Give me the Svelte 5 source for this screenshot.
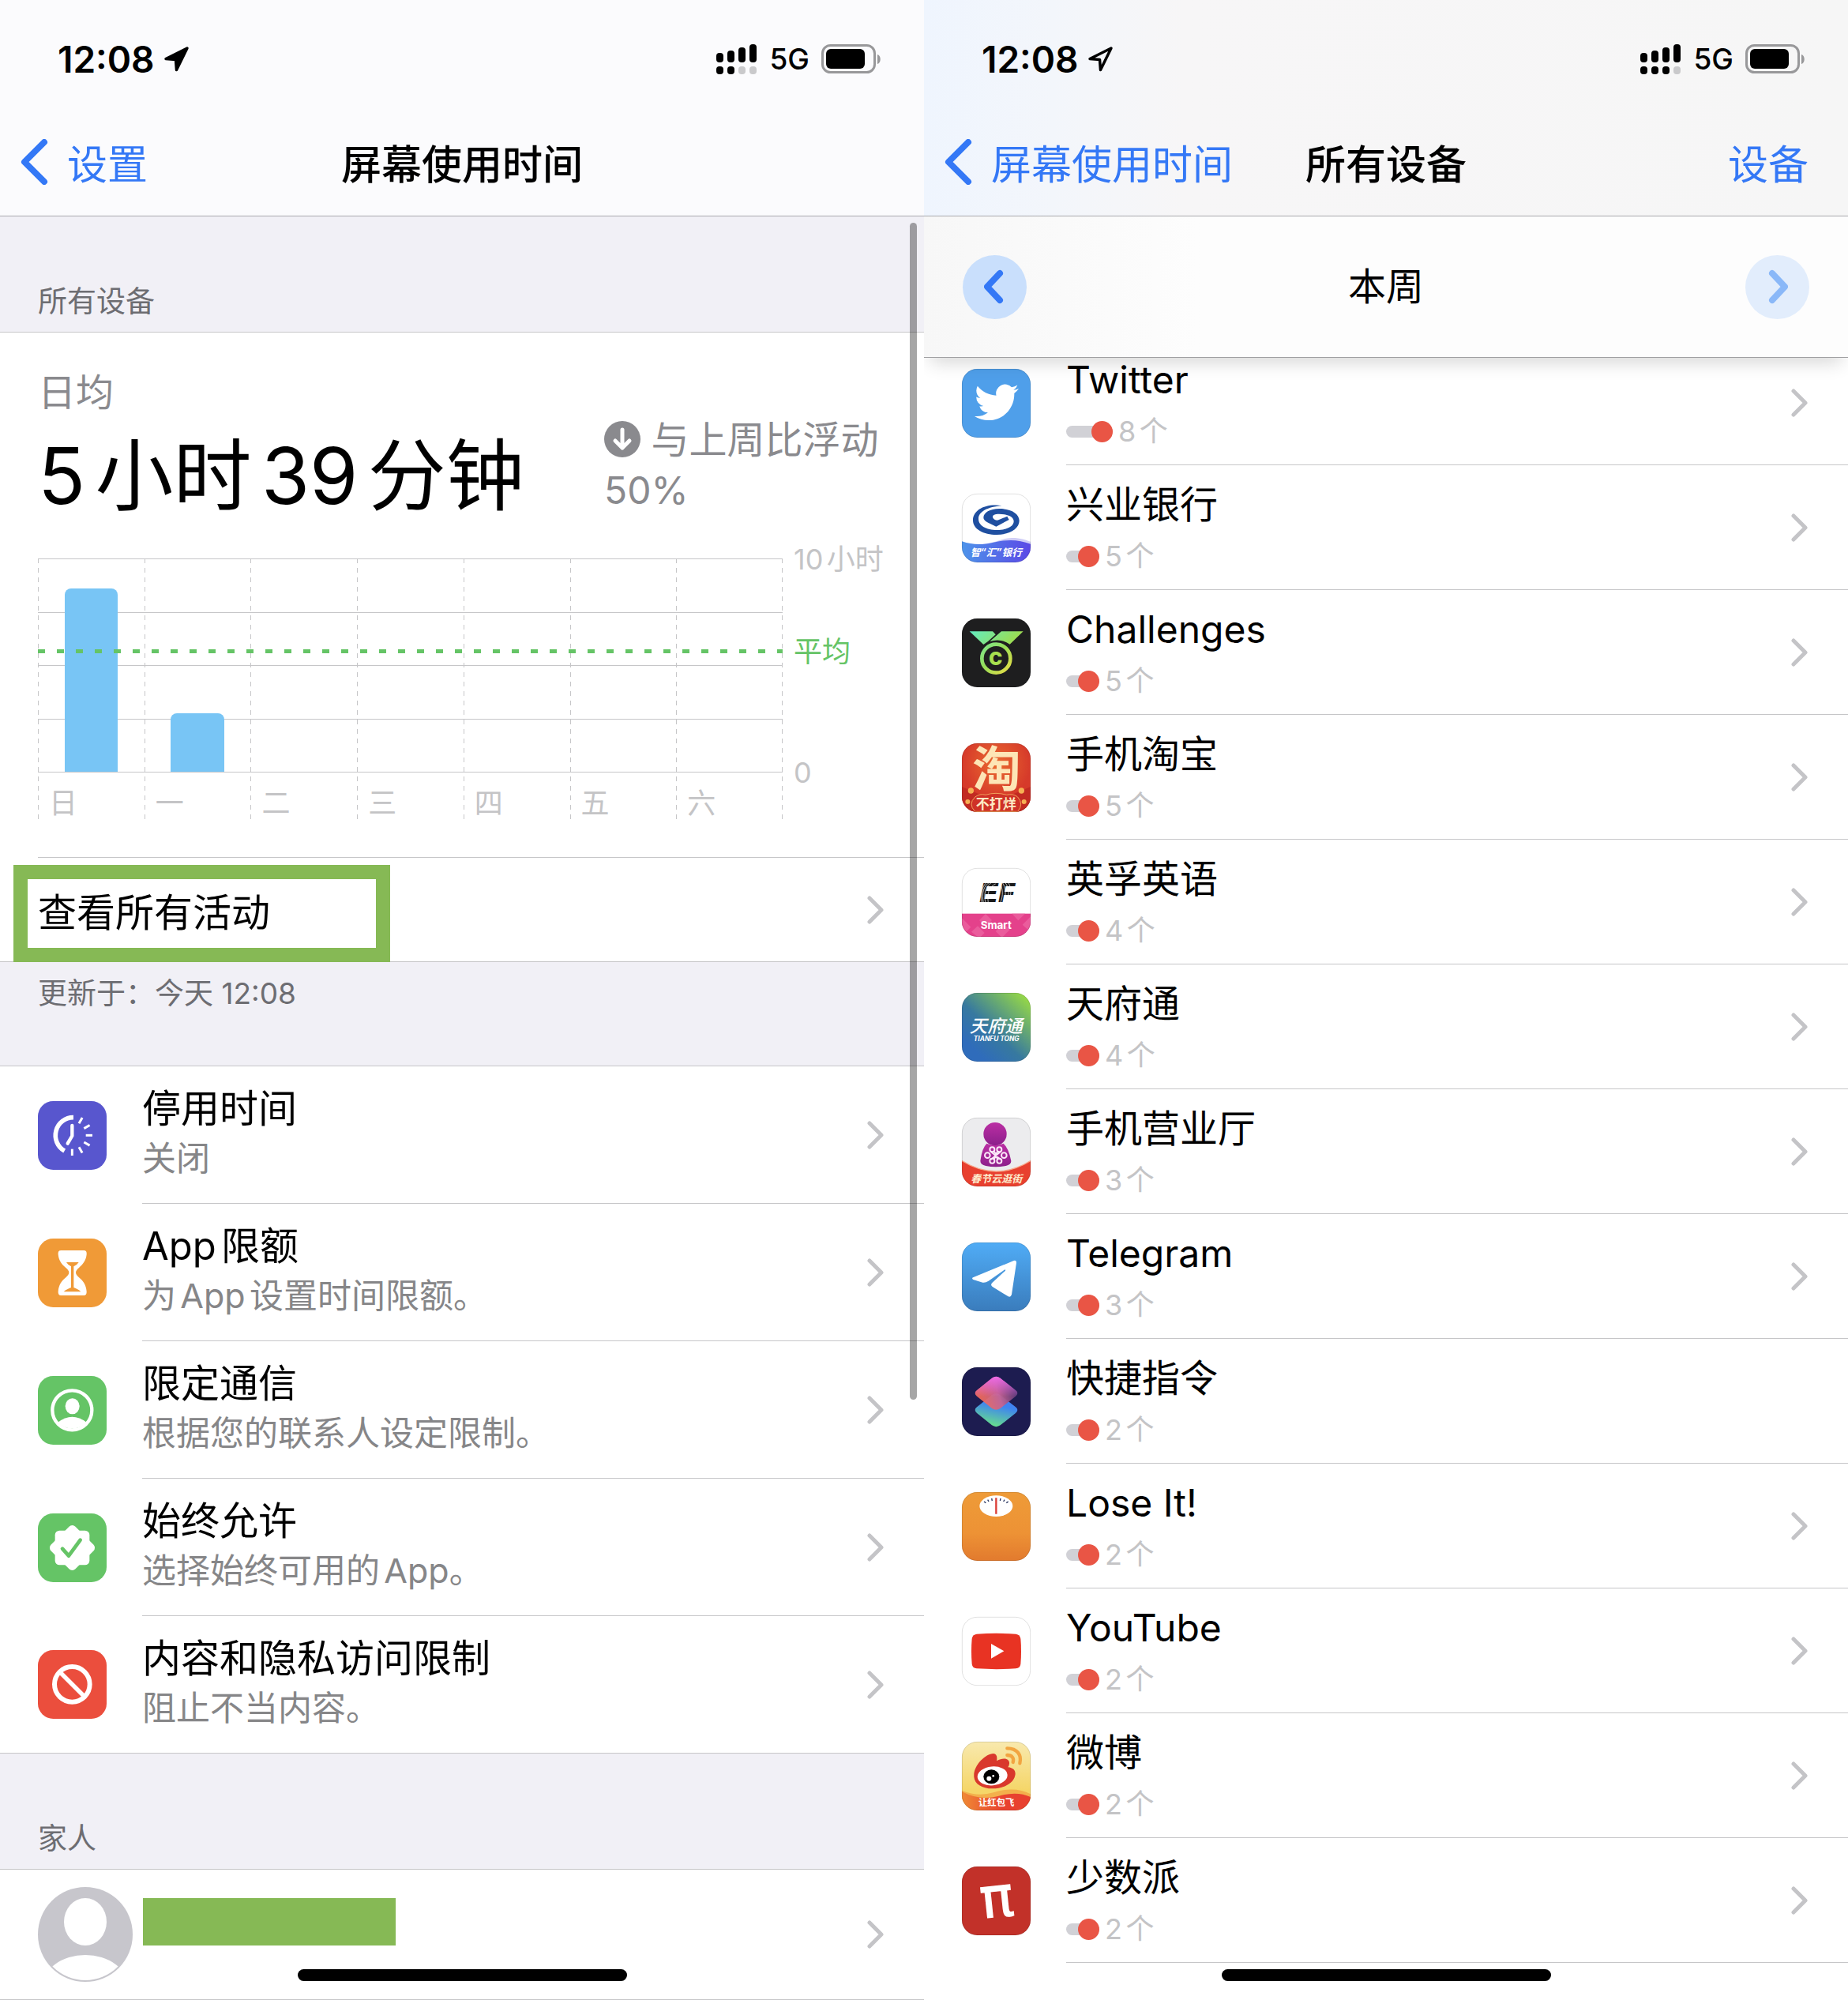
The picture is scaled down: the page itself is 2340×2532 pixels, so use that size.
<script>
  const week = [
    { day: "日", hours: 8.6 },
    { day: "一", hours: 2.75 },
    { day: "二", hours: 0 },
    { day: "三", hours: 0 },
    { day: "四", hours: 0 },
    { day: "五", hours: 0 },
    { day: "六", hours: 0 },
  ];
  const maxHours = 10;

  const limits = [
    { icon: "downtime", color: "#5856ce", title: "停用时间", detail: "关闭" },
    { icon: "hourglass", color: "#f09a37", title: "App限额", detail: "为App设置时间限额。" },
    { icon: "person", color: "#65c466", title: "限定通信", detail: "根据您的联系人设定限制。" },
    { icon: "allowed", color: "#65c466", title: "始终允许", detail: "选择始终可用的App。" },
    { icon: "blocked", color: "#eb4e3d", title: "内容和隐私访问限制", detail: "阻止不当内容。" },
  ];

  // pill is the length of the usage bar in front of the count
  const apps = [
    { icon: "twitter", name: "Twitter", count: 8, pill: 59, more: true },
    { icon: "cib", name: "兴业银行", count: 5, pill: 42, more: true },
    { icon: "challenges", name: "Challenges", count: 5, pill: 42, more: true },
    { icon: "taobao", name: "手机淘宝", count: 5, pill: 42, more: true },
    { icon: "ef", name: "英孚英语", count: 4, pill: 42, more: true },
    { icon: "tianfu", name: "天府通", count: 4, pill: 42, more: true },
    { icon: "unicom", name: "手机营业厅", count: 3, pill: 42, more: true },
    { icon: "telegram", name: "Telegram", count: 3, pill: 42, more: true },
    { icon: "shortcuts", name: "快捷指令", count: 2, pill: 42, more: false },
    { icon: "loseit", name: "Lose It!", count: 2, pill: 42, more: true },
    { icon: "youtube", name: "YouTube", count: 2, pill: 42, more: true },
    { icon: "weibo", name: "微博", count: 2, pill: 42, more: true },
    { icon: "sspai", name: "少数派", count: 2, pill: 42, more: true },
  ];
</script>

{#snippet statusBar(filled, dots)}
  <div class="status">
    <span class="time">12:08</span>
    <svg class="location" viewBox="0 0 34 34" width="34" height="34">
      <path
        d="M31 3 4 16.5 16.5 17.500 17.500 30.500Z"
        fill={filled ? "#000" : "none"}
        stroke="#000"
        stroke-width="3.500"
        stroke-linejoin="round"
      />
    </svg>
    <svg class="signal" viewBox="0 0 52 38" width="52" height="38">
      <rect x="0" y="11" width="9" height="12" rx="4" />
      <rect x="14" y="8" width="9" height="15" rx="4" />
      <rect x="28" y="4" width="9" height="19" rx="4" />
      <rect x="42" y="0" width="9" height="23" rx="4" />
      {#each [0, 14, 28, 42] as x, i}
        <rect {x} y="28" width="9" height="10" rx="4" fill={i < dots ? "#000" : "#c9c9cb"} />
      {/each}
    </svg>
    <span class="network">5G</span>
    <svg class="battery" viewBox="0 0 76 38" width="76" height="38">
      <rect x="1.500" y="1.500" width="66" height="34" rx="10" fill="none" stroke="#98989a" stroke-width="3" />
      <rect x="6" y="6" width="49" height="25" rx="6" />
      <path d="M71 13c5 1 5 11 0 12Z" fill="#98989a" />
    </svg>
  </div>
{/snippet}

{#snippet back(label)}
  <button class="back">
    <svg viewBox="0 0 36 58" width="36" height="58">
      <path d="M31 4 6 29l25 25" />
    </svg>
    {label}
  </button>
{/snippet}

{#snippet chevron()}
  <svg class="chevron" viewBox="0 0 22 36" width="22" height="36">
    <path d="M4 3l15 15L4 33" />
  </svg>
{/snippet}

{#snippet settingIcon(name, color)}
  <svg class="icon" viewBox="0 0 261 261">
    <rect width="261" height="261" rx="58" fill={color} />
    {#if name === "downtime"}
      <g fill="none" stroke="#fff">
        <path d="M135 62a68 68 0 0 0-34 127" stroke-width="17" />
        <path d="M130 93v39l-17 29" stroke-width="13" stroke-linecap="round" stroke-linejoin="round" />
        {#each [30, 60, 90, 120, 150, 180] as angle}
          <path d="M130 78V53" stroke-width="9" transform="rotate({angle} 130 130)" />
        {/each}
      </g>
    {:else if name === "hourglass"}
      <path
        fill="#fff"
        d="M88 45h86q13 0 11 16c-3 25-15 37-29 50q-12 10-12 18t12 19c17 14 27 29 29 53q1 15-11 15H88q-12 0-11-15c2-24 12-39 29-53q12-11 12-19t-12-18C91 98 80 86 77 61q-2-16 11-16Z"
      />
      <path
        fill={color}
        d="M108 90h47q-4 8-19 16v80c10 4 20 8 27 16H98c8-8 19-12 28-16v-80q-14-8-18-16Z"
      />
    {:else if name === "person"}
      <circle cx="130" cy="130" r="75" fill="none" stroke="#fff" stroke-width="13" />
      <ellipse cx="131" cy="115" rx="27" ry="30" fill="#fff" />
      <path d="M76 176q54-42 109 0a75 75 0 0 1-109 0Z" fill="#fff" />
    {:else if name === "allowed"}
      <rect x="65" y="65" width="131" height="131" rx="17" fill="#fff" />
      <rect x="65" y="65" width="131" height="131" rx="17" fill="#fff" transform="rotate(45 130.500 130.500)" />
      <path
        d="M93 134l24 27 44-60"
        fill="none"
        stroke={color}
        stroke-width="14"
        stroke-linecap="round"
        stroke-linejoin="round"
      />
    {:else}
      <circle cx="130" cy="130" r="67" fill="none" stroke="#fff" stroke-width="18" />
      <path d="M84 84l93 93" stroke="#fff" stroke-width="16" />
    {/if}
  </svg>
{/snippet}

{#snippet appIcon(name)}
  <svg class="icon app-icon" viewBox="0 0 261 261">
    <clipPath id="{name}-clip"><rect width="261" height="261" rx="58" /></clipPath>
    <g clip-path="url(#{name}-clip)">
      {#if name === "twitter"}
        <rect width="261" height="261" fill="#4f9fea" />
        <path
          fill="#fff"
          transform="translate(48 43) scale(7)"
          d="M23.953 4.570a10 10 0 0 1-2.825.775 4.958 4.958 0 0 0 2.163-2.723c-.951.555-2.005.959-3.127 1.184a4.920 4.920 0 0 0-8.384 4.482C7.690 8.095 4.067 6.130 1.640 3.162a4.822 4.822 0 0 0-.666 2.475c0 1.710.870 3.213 2.188 4.096a4.904 4.904 0 0 1-2.228-.616v.060a4.923 4.923 0 0 0 3.946 4.827 4.996 4.996 0 0 1-2.212.085 4.936 4.936 0 0 0 4.604 3.417 9.867 9.867 0 0 1-6.102 2.105c-.390 0-.779-.023-1.170-.067a13.995 13.995 0 0 0 7.557 2.209c9.053 0 13.998-7.496 13.998-13.985 0-.210 0-.420-.015-.630A9.935 9.935 0 0 0 24 4.590z"
        />
      {:else if name === "cib"}
        <defs>
          <linearGradient id="cib-wave">
            <stop offset="0" stop-color="#4d94ea" />
            <stop offset="1" stop-color="#5b48e6" />
          </linearGradient>
        </defs>
        <rect width="261" height="261" fill="#fff" />
        <path fill="#cfcdf6" d="M60 192c60 0 90-24 130-24 35 0 50 8 71 14v40H60Z" />
        <path fill="url(#cib-wave)" d="M0 181c40 14 80 14 120 4 50-12 95-12 141 6v70H0Z" />
        <path
          fill="#1f4fa0"
          d="M152 46C90 36 42 62 42 101c0 33 40 55 90 55 48 0 86-22 86-53 0-28-33-46-76-46-36 0-60 15-60 34 0 14 20 20 48 34l49-26-7-13-33 14c-10 4-22-4-22-12 0-7 8-11 24-11 34 0 56 11 56 28 0 20-28 33-64 33-40 0-70-16-70-42 0-28 35-46 89-50Z"
        />
        <text x="130" y="238" class="label" font-size="38" font-style="italic" fill="#fff">智“汇”银行</text>
      {:else if name === "challenges"}
        <defs>
          <linearGradient id="medal" x1="30" y1="50" x2="190" y2="210" gradientUnits="userSpaceOnUse">
            <stop offset="0" stop-color="#63ecc0" />
            <stop offset=".6" stop-color="#98dd57" />
            <stop offset="1" stop-color="#f3dd45" />
          </linearGradient>
        </defs>
        <rect width="261" height="261" fill="#1e1e1f" />
        <path fill="url(#medal)" d="M29 49h88l11 12-28 25-18 13Z" />
        <path fill="url(#medal)" d="M150 49h83l-51 49q-34-24-76-11Z" />
        <circle cx="130" cy="152" r="54" fill="none" stroke="url(#medal)" stroke-width="14" />
        <text x="128" y="177" class="label black" font-size="68" fill="#a8e04f">C</text>
      {:else if name === "taobao"}
        <defs>
          <radialGradient id="taobao" cy=".3">
            <stop offset="0" stop-color="#ea6a2f" />
            <stop offset="1" stop-color="#d63a2a" />
          </radialGradient>
        </defs>
        <rect width="261" height="261" fill="url(#taobao)" />
        <path fill="#c22a22" d="M0 165l70 30h120l71-30v96H0Z" />
        <g fill="#f6b054">
          <circle cx="34" cy="180" r="11" />
          <circle cx="226" cy="180" r="11" />
          <circle cx="22" cy="222" r="9" />
          <circle cx="236" cy="222" r="9" />
        </g>
        <path fill="#cf3127" stroke="#f2a25c" stroke-width="3" d="M50 259q-28-28 0-55 18-14 40-8 38-12 80 0 26-6 42 8 24 27 0 55Z" />
        <text x="132" y="164" class="label" font-size="184" fill="#fde5b6">淘</text>
        <text x="130" y="248" class="label" font-size="51" fill="#fdeac4">不打烊</text>
      {:else if name === "ef"}
        <rect width="261" height="261" fill="#fff" />
        <rect y="173" width="261" height="88" fill="#e4418b" />
        <g fill="#ea5c9c">
          <path d="M0 190l34 34-34 34ZM90 174l24 24-24 24-24-24ZM128 240l30-30 24 24-30 30Z" />
          <path d="M190 173h50l-26 26ZM230 215l31-31v60ZM60 220l26 26-20 20-30-24Z" />
        </g>
        <text x="134" y="130" class="label latin" font-size="106" font-style="italic" fill="#1b1b1b">EF</text>
        <g fill="none" stroke="#fff" stroke-width="2">
          <path d="M96 52c-20 16-26 48-20 80M108 52c-26 14-34 44-26 80M118 52c-30 16-36 46-28 80M128 60c-28 12-32 40-28 72" />
          <path d="M142 52c14 24 16 52 4 80M152 52c16 24 18 52 4 80M162 52c20 24 20 56 2 80M174 52c16 22 14 50 4 70" />
        </g>
        <text x="130" y="231" class="label" font-size="40" fill="#fff">Smart</text>
      {:else if name === "tianfu"}
        <defs>
          <linearGradient id="tianfu" x1=".2" y1=".85" x2=".95" y2=".05">
            <stop offset="0" stop-color="#2f6cbb" />
            <stop offset=".35" stop-color="#37799f" />
            <stop offset="1" stop-color="#98da45" />
          </linearGradient>
        </defs>
        <rect width="261" height="261" fill="url(#tianfu)" />
        <text x="130" y="150" class="label medium" font-size="67" font-style="italic" fill="#fff">天府通</text>
        <text x="131" y="184" class="label" font-size="25" font-style="italic" fill="#fff">TIANFU TONG</text>
      {:else if name === "unicom"}
        <defs>
          <linearGradient id="unicom" x2="0" y2="1">
            <stop offset="0" stop-color="#bb2fa4" />
            <stop offset="1" stop-color="#8c1f8b" />
          </linearGradient>
        </defs>
        <rect width="261" height="261" fill="#ececee" />
        <circle cx="126" cy="62" r="44" fill="url(#unicom)" />
        <path fill="url(#unicom)" d="M94 98q32 14 64 0 20 18 29 66 1 14-20 19-38 8-76 0-21-5-21-19 6-48 24-66Z" />
        <g fill="none" stroke="#fbe8f8" stroke-width="6">
          <circle cx="115" cy="121" r="9" />
          <circle cx="142" cy="121" r="9" />
          <circle cx="97" cy="143" r="10" />
          <circle cx="160" cy="143" r="10" />
          <circle cx="115" cy="164" r="9" />
          <circle cx="142" cy="164" r="9" />
          <path d="M110 129l37 30M147 129l-37 30M121 128l8 9 8-9M121 157l8-9 8 9" />
        </g>
        <path fill="#e8402f" stroke="#f7a98c" stroke-width="4" d="M-4 161q134 86 269 0v104H-4Z" />
        <text x="131" y="247" class="label" font-size="39" font-style="italic" fill="#fdeccd">春节云逛街</text>
      {:else if name === "telegram"}
        <defs>
          <linearGradient id="telegram" x2="0" y2="1">
            <stop offset="0" stop-color="#50acf6" />
            <stop offset="1" stop-color="#3a7cbc" />
          </linearGradient>
        </defs>
        <rect width="261" height="261" fill="url(#telegram)" />
        <path
          fill="#fff"
          d="M42 133 197 69q10-3 10 8l-18 120q-3 12-13 8l-60-37q-9-7-1-15l50-46q2-6-4-3l-60 42q-12 8-22 6l-36-11q-7-4-1-8Z"
        />
      {:else if name === "shortcuts"}
        <defs>
          <linearGradient id="lower" x1=".5" y1="1" x2=".8" y2="0">
            <stop offset="0" stop-color="#66dd8d" />
            <stop offset=".6" stop-color="#3f84f0" />
            <stop offset="1" stop-color="#4379f4" />
          </linearGradient>
          <linearGradient id="upper" x1=".2" y1=".8" x2="1" y2=".6">
            <stop offset="0" stop-color="#ef6a5e" />
            <stop offset=".5" stop-color="#c96390" />
            <stop offset="1" stop-color="#5d3b7b" />
          </linearGradient>
          <linearGradient id="glow" x2="0" y2="1">
            <stop offset="0" stop-color="#ee6ae6" />
            <stop offset=".6" stop-color="#ee6ae6" stop-opacity="0" />
          </linearGradient>
        </defs>
        <rect width="261" height="261" fill="#1d1c50" />
        <path fill="url(#lower)" d="M146 105l58 46q14 11 0 23l-58 46q-16 11-32 0l-57-46q-14-12 0-23l57-46q16-11 32 0Z" />
        <path fill="url(#upper)" fill-opacity=".93" d="M146 41l58 46q14 11 0 23l-58 46q-16 11-32 0l-57-46q-14-12 0-23l57-46q16-11 32 0Z" />
        <path fill="url(#glow)" d="M146 41l58 46q14 11 0 23l-58 46q-16 11-32 0l-57-46q-14-12 0-23l57-46q16-11 32 0Z" />
      {:else if name === "loseit"}
        <defs>
          <linearGradient id="loseit" x2="0" y2="1">
            <stop offset="0" stop-color="#ee9b38" />
            <stop offset=".6" stop-color="#ed9235" />
            <stop offset="1" stop-color="#e27a2e" />
          </linearGradient>
        </defs>
        <rect width="261" height="261" fill="url(#loseit)" />
        <ellipse cx="130" cy="53" rx="63" ry="40" fill="#fff" />
        <path d="M84 36l7 5M98 29l4 7M113 24l2 9M147 24l-2 9M162 29l-4 7M176 36l-7 5" stroke="#28345f" stroke-width="4" />
        <path d="M130 22v61" stroke="#dc3f38" stroke-width="7" />
      {:else if name === "youtube"}
        <rect width="261" height="261" fill="#fff" />
        <path fill="#e83323" d="M56 65q75-5 149 0 16 2 18 18 4 48 0 96-2 15-18 17-74 5-149 0-16-2-18-17-4-48 0-96 2-16 18-18Z" />
        <path fill="#fff" d="M111 102l49 28-49 28Z" />
      {:else if name === "weibo"}
        <defs>
          <linearGradient id="weibo" x2="0" y2="1">
            <stop offset="0" stop-color="#f8e9ae" />
            <stop offset=".7" stop-color="#f5d669" />
          </linearGradient>
          <linearGradient id="weibo-wave">
            <stop offset="0" stop-color="#f08a35" />
            <stop offset=".6" stop-color="#e8412f" />
          </linearGradient>
        </defs>
        <rect width="261" height="261" fill="url(#weibo)" />
        <path fill="#f3b04c" d="M0 185q60 26 120 8 80-26 141 6v30H0Z" />
        <path fill="url(#weibo-wave)" d="M0 190q70 36 140 16 70-20 121 4v51H0Z" />
        <path
          fill="#d9382c"
          d="M46 134c-4-42 42-88 74-89q17 2 12 28c24-14 46-10 48 6q1 10-5 18c22 2 31 15 27 31-6 32-48 50-86 50-40 0-68-18-70-44Z"
        />
        <ellipse cx="116" cy="130" rx="57" ry="36" fill="#fff" transform="rotate(-5 116 130)" />
        <ellipse cx="112" cy="133" rx="30" ry="27" fill="#000" />
        <circle cx="103" cy="140" r="9" fill="#fff" />
        <circle cx="119" cy="130" r="4" fill="#fff" />
        <g fill="none" stroke="#f2a541" stroke-width="13" stroke-linecap="round">
          <path d="M172 25c38 0 56 26 48 57" />
          <path d="M172 51c18 0 27 11 22 27" />
        </g>
        <text x="131" y="244" class="label" font-size="34" fill="#fff">让红包飞</text>
      {:else}
        <rect width="261" height="261" fill="#c23129" />
        <text x="133" y="190" class="label pi" font-size="212" fill="#fff" transform="rotate(-6 131 130)">π</text>
      {/if}
    </g>
    <rect class="edge" x="1" y="1" width="259" height="259" rx="57" />
  </svg>
{/snippet}

<main>
  <section class="screen">
    <header class="nav">
      {@render statusBar(true, 2)}
      <div class="nav-row">
        {@render back("设置")}
        <h1>屏幕使用时间</h1>
      </div>
    </header>

    <h2 class="group-title">所有设备</h2>

    <div class="summary">
      <div class="totals">
        <div>
          <p class="caption">日均</p>
          <p class="total">5小时39分钟</p>
        </div>
        <p class="change">
          <svg viewBox="0 0 46 46" width="46" height="46">
            <circle cx="23" cy="23" r="23" fill="#8a8a8e" />
            <path d="M23 11v23M14 25l9 9 9-9" />
          </svg>
          与上周比浮动<br />50%
        </p>
      </div>

      <div class="chart">
        <div class="plot">
          <div class="gridlines">
            {#each Array(5) as _}
              <span></span>
            {/each}
          </div>
          {#each week as { day, hours }}
            <div class="day">
              <div class="track">
                <div class="bar" style="height: {(hours / maxHours) * 100}%"></div>
              </div>
              <span>{day}</span>
            </div>
          {/each}
          <svg class="average" width="100%" height="5">
            <line x1="0" y1="2.500" x2="100%" y2="2.500" />
          </svg>
        </div>
        <div class="axis">
          <span>10小时</span>
          <span class="avg-label">平均</span>
          <span>0</span>
        </div>
      </div>

      <a class="view-all" href="#activity">
        <span>查看所有活动</span>
        {@render chevron()}
      </a>
    </div>

    <p class="updated">更新于：今天 12:08</p>

    <ul class="limits">
      {#each limits as item}
        <li>
          <a href="#{item.icon}">
            {@render settingIcon(item.icon, item.color)}
            <div class="body">
              <div>
                <p class="title">{item.title}</p>
                <p class="detail">{item.detail}</p>
              </div>
              {@render chevron()}
            </div>
          </a>
        </li>
      {/each}
    </ul>

    <h2 class="group-title">家人</h2>

    <a class="member" href="#family" aria-label="家人">
      <svg class="avatar" viewBox="0 0 120 120" width="120" height="120">
        <clipPath id="avatar-clip"><circle cx="60" cy="60" r="58" /></clipPath>
        <circle cx="60" cy="60" r="60" fill="#c7c6cc" />
        <ellipse cx="60" cy="44" rx="27" ry="30" fill="#fff" />
        <ellipse cx="60" cy="126" rx="54" ry="40" fill="#fff" clip-path="url(#avatar-clip)" />
      </svg>
      <span class="redacted"></span>
      {@render chevron()}
    </a>

    <div class="scrollbar"></div>
    <div class="home"><span></span></div>
  </section>

  <section class="screen">
    <header class="nav tinted">
      {@render statusBar(false, 3)}
      <div class="nav-row">
        {@render back("屏幕使用时间")}
        <h1>所有设备</h1>
        <button class="devices">设备</button>
      </div>
    </header>

    <div class="week">
      <button aria-label="上一周">
        <svg viewBox="0 0 28 44" width="28" height="44"><path d="M20 5 4 22l16 17" /></svg>
      </button>
      <span>本周</span>
      <button aria-label="下一周" class="dim">
        <svg viewBox="0 0 28 44" width="28" height="44"><path d="M8 5l16 17L8 39" /></svg>
      </button>
    </div>

    <ul class="apps">
      {#each apps as app}
        <li>
          <a href="#{app.icon}">
            {@render appIcon(app.icon)}
            <div class="body">
              <div>
                <p class="title">{app.name}</p>
                <p class="count">
                  <span class="pill" style="width: {app.pill}px"></span>
                  <span>{app.count}个</span>
                </p>
              </div>
              {#if app.more}
                {@render chevron()}
              {/if}
            </div>
          </a>
        </li>
      {/each}
    </ul>

    <div class="home"><span></span></div>
  </section>
</main>

<style>
  :global(body) {
    margin: 0;
    background: #fff;
  }

  main {
    display: grid;
    grid-template-columns: 1fr 1fr;
    font-family: Inter, "Noto Sans CJK SC", sans-serif;
    font-size: 48px;
    color: #000;
    text-autospace: normal;
  }

  h1,
  h2,
  p,
  ul {
    margin: 0;
    padding: 0;
    font-weight: 400;
  }

  li {
    list-style: none;
  }

  a {
    color: inherit;
    text-decoration: none;
  }

  button {
    border: 0;
    padding: 0;
    background: none;
    font: inherit;
    color: #3478f6;
    cursor: pointer;
  }

  .screen {
    position: relative;
    background: #fff;
    overflow: hidden;
  }

  /* status and navigation bars */
  .nav {
    background: #fbfbfd;
    border-bottom: 1px solid #a9a9ad;
  }

  .nav.tinted {
    background: linear-gradient(to right, #eff5fe 0, #f3f6fb 14%, #f7f6f7 28%, #f6f6f6 100%);
  }

  .status {
    display: flex;
    align-items: center;
    height: 141px;
    padding: 8px 54px 0 73px;
    box-sizing: border-box;
  }

  .time {
    font-size: 46px;
    font-weight: 600;
  }

  .location {
    margin-left: 10px;
  }

  .signal {
    margin-left: auto;
  }

  .network {
    margin: 0 15px;
    font-size: 37px;
    font-weight: 500;
  }

  .nav-row {
    display: grid;
    grid-template-columns: 1fr auto 1fr;
    align-items: center;
    height: 132px;
    padding: 0 50px 4px 25px;
    box-sizing: border-box;
    font-size: 51px;
  }

  h1 {
    grid-column: 2;
    padding-left: 25px;
    font-size: 51px;
    font-weight: 500;
  }

  .back {
    display: flex;
    align-items: center;
    gap: 24px;
    white-space: nowrap;
    width: 0;
  }

  .back svg {
    flex: none;
  }

  .back path {
    fill: none;
    stroke: #3478f6;
    stroke-width: 8;
    stroke-linecap: round;
    stroke-linejoin: round;
  }

  .devices {
    justify-self: end;
  }

  .chevron {
    flex: none;
    margin-left: auto;
  }

  .chevron path {
    fill: none;
    stroke: #c4c4c7;
    stroke-width: 5;
    stroke-linecap: round;
    stroke-linejoin: round;
  }

  /* grey group areas */
  .group-title,
  .updated {
    background: #f1f0f6;
    border-bottom: 1px solid #c6c6c8;
    color: #6d6d72;
    font-size: 37px;
    line-height: 44px;
  }

  .group-title {
    padding: 86px 48px 16px;
  }

  .updated {
    padding: 18px 48px 69px;
  }

  /* weekly summary */
  .summary {
    border-bottom: 1px solid #c6c6c8;
  }

  .totals {
    display: flex;
    justify-content: space-between;
    align-items: flex-end;
    padding: 46px 48px 0;
  }

  .caption {
    color: #8a8a8e;
    line-height: 60px;
  }

  .total {
    margin-top: 20px;
    font-size: 99px;
    line-height: 110px;
    white-space: nowrap;
  }

  .change {
    width: 357px;
    margin-bottom: 4px;
    color: #8a8a8e;
    line-height: 64px;
    white-space: nowrap;
  }

  .change svg {
    vertical-align: -5px;
  }

  .change path {
    fill: none;
    stroke: #fff;
    stroke-width: 5;
    stroke-linecap: round;
    stroke-linejoin: round;
  }

  .chart {
    display: grid;
    grid-template-columns: 1fr 165px;
    gap: 14px;
    margin: 50px 0 48px 48px;
    font-size: 36px;
    color: #c4c4c6;
  }

  .plot {
    position: relative;
    display: grid;
    grid-template-columns: repeat(7, 1fr);
  }

  .plot::after {
    content: "";
    position: absolute;
    inset: 0 0 0 auto;
    width: 1px;
    background: repeating-linear-gradient(#c6c6c8 0 6px, transparent 6px 12px);
  }

  .gridlines {
    position: absolute;
    inset: 0 0 auto;
    height: 271px;
    display: flex;
    flex-direction: column;
    justify-content: space-between;
  }

  .gridlines span {
    height: 1px;
    background: #c6c6c8;
  }

  .day {
    position: relative;
    background: repeating-linear-gradient(#c6c6c8 0 6px, transparent 6px 12px) left / 1px 100% no-repeat;
  }

  .day > span {
    display: block;
    padding: 10px 0 0 14px;
    margin-bottom: -10px;
    line-height: 60px;
  }

  .track {
    display: flex;
    align-items: flex-end;
    justify-content: center;
    height: 270px;
  }

  .bar {
    width: 50%;
    background: #78c5f5;
    border-radius: 8px 8px 0 0;
  }

  .average {
    position: absolute;
    top: 115px;
    left: 0;
  }

  .average line {
    stroke: #65c466;
    stroke-width: 5;
    stroke-dasharray: 9 15;
  }

  .axis {
    display: flex;
    flex-direction: column;
    justify-content: space-between;
    height: 314px;
    margin-top: -21px;
    line-height: 44px;
  }

  .avg-label {
    color: #65c466;
    margin-bottom: 36px;
  }

  .view-all {
    position: relative;
    display: flex;
    align-items: center;
    height: 131px;
    margin-left: 48px;
    padding-right: 51px;
    border-top: 1px solid #c6c6c8;
    font-size: 49px;
  }

  /* marker drawn round the row's label */
  .view-all::before {
    content: "";
    position: absolute;
    left: -31px;
    top: 9px;
    width: 441px;
    height: 87px;
    border: 18px solid #86b955;
  }

  /* rows with an icon */
  .icon {
    flex: none;
    width: 87px;
    height: 87px;
  }

  li a,
  .member {
    display: flex;
    align-items: center;
    padding-left: 48px;
  }

  .body {
    flex: 1;
    display: flex;
    align-items: center;
    align-self: stretch;
    margin-left: 45px;
    padding-right: 51px;
    border-bottom: 1px solid #c6c6c8;
  }

  .limits a {
    height: 174px;
  }

  .limits .body > div {
    padding-bottom: 3px;
    line-height: 62px;
  }

  .limits .title {
    font-size: 49px;
  }

  .limits li:last-child a {
    height: 173px;
    border-bottom: 1px solid #c6c6c8;
  }

  .limits li:last-child .body {
    border-bottom: 0;
  }

  .detail {
    font-size: 43px;
    color: #868688;
  }

  .member {
    height: 164px;
    padding-right: 51px;
    border-bottom: 1px solid #c6c6c8;
  }

  .redacted {
    align-self: flex-start;
    width: 320px;
    height: 60px;
    margin: 36px 0 0 13px;
    background: #86b955;
  }

  .scrollbar {
    position: absolute;
    top: 282px;
    right: 9px;
    width: 9px;
    height: 1490px;
    border-radius: 5px;
    background: rgb(0 0 0 / 35%);
  }

  .home {
    position: absolute;
    inset: auto 0 24px;
    display: flex;
    justify-content: center;
  }

  .home span {
    width: 417px;
    height: 15px;
    border-radius: 8px;
    background: #000;
  }

  /* week switcher */
  .week {
    position: relative;
    z-index: 1;
    display: flex;
    align-items: center;
    justify-content: space-between;
    height: 179px;
    padding: 0 49px;
    box-sizing: border-box;
    background: linear-gradient(to right, #f7f7f7, #fdfdfd 30%);
    border-bottom: 1px solid #a0a0a2;
    box-shadow: 0 14px 22px -8px rgb(0 0 0 / 16%);
  }

  .week span {
    line-height: 60px;
  }

  .week button {
    display: flex;
    align-items: center;
    justify-content: center;
    width: 81px;
    height: 81px;
    border-radius: 50%;
    background: #c9dffc;
  }

  .week .dim {
    background: #e2edfc;
  }

  .week path {
    fill: none;
    stroke: #3478f6;
    stroke-width: 8;
    stroke-linecap: round;
    stroke-linejoin: round;
  }

  .week .dim path {
    stroke: #8ab8f8;
  }

  /* the first row starts under the week switcher */
  .apps {
    margin-top: -22px;
  }

  .apps a {
    height: 158px;
  }

  .apps .title {
    line-height: 60px;
  }

  .count {
    display: flex;
    align-items: center;
    gap: 7px;
    margin-top: 13px;
    font-size: 36px;
    line-height: 44px;
    color: #c4c4c6;
  }

  .pill {
    display: flex;
    justify-content: flex-end;
    align-items: center;
    height: 15px;
    border-radius: 8px;
    background: #d1d1d6;
  }

  .pill::after {
    content: "";
    width: 27px;
    height: 27px;
    border-radius: 50%;
    background: #e95545;
  }

  .app-icon {
    overflow: visible;
  }

  .edge {
    fill: none;
    stroke: rgb(0 0 0 / 12%);
    stroke-width: 3;
  }

  .label {
    text-anchor: middle;
    font-weight: 700;
  }

  .label.medium {
    font-weight: 500;
  }

  .label.black {
    font-weight: 900;
  }

  .label.latin {
    font-family: "Liberation Sans", sans-serif;
  }

  .label.pi {
    font-family: "DejaVu Sans", sans-serif;
    font-weight: 400;
    stroke: #fff;
    stroke-width: 4px;
  }
</style>
